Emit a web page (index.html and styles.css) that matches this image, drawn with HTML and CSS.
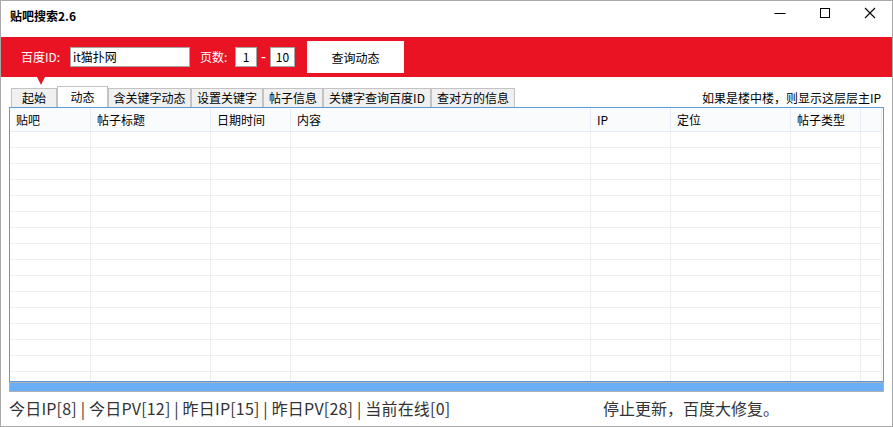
FILE: index.html
```html
<!DOCTYPE html>
<html lang="zh-CN">
<head>
<meta charset="utf-8">
<title>贴吧搜索2.6</title>
<link rel="stylesheet" href="styles.css">
</head>
<body>
<div class="window">
  <div class="titlebar">
    <div class="title">贴吧搜索2.6</div>
    <div class="controls">
      <div class="ctl"><svg width="12" height="12" viewBox="0 0 12 12"><path d="M0.5 6.5H11.5" stroke="#000" stroke-width="1"/></svg></div>
      <div class="ctl"><svg width="12" height="12" viewBox="0 0 12 12"><rect x="1.5" y="1.5" width="9" height="9" fill="none" stroke="#000" stroke-width="1"/></svg></div>
      <div class="ctl"><svg width="12" height="12" viewBox="0 0 12 12"><path d="M1 1L11 11M11 1L1 11" stroke="#000" stroke-width="1.1"/></svg></div>
    </div>
  </div>

  <div class="toolbar">
    <span class="lbl lbl-id">百度ID:</span>
    <div class="field field-id">it猫扑网</div>
    <span class="lbl lbl-page">页数:</span>
    <div class="field field-num">1</div>
    <span class="dash">-</span>
    <div class="field field-num2">10</div>
    <div class="btn">查询动态</div>
    <div class="pointer"></div>
  </div>

  <div class="tabrow">
    <div class="tabs">
      <div class="tab w1">起始</div>
      <div class="tab active w2">动态</div>
      <div class="tab w3">含关键字动态</div>
      <div class="tab w4">设置关键字</div>
      <div class="tab w5">帖子信息</div>
      <div class="tab w6">关键字查询百度ID</div>
      <div class="tab w7">查对方的信息</div>
    </div>
    <div class="hint">如果是楼中楼，则显示这层层主IP</div>
  </div>

  <div class="grid">
    <div class="row head">
      <div class="c">贴吧</div><div class="c">帖子标题</div><div class="c">日期时间</div><div class="c">内容</div><div class="c">IP</div><div class="c">定位</div><div class="c">帖子类型</div><div class="c"></div>
    </div>
    <div class="row"><div class="c"></div><div class="c"></div><div class="c"></div><div class="c"></div><div class="c"></div><div class="c"></div><div class="c"></div><div class="c"></div></div>
    <div class="row"><div class="c"></div><div class="c"></div><div class="c"></div><div class="c"></div><div class="c"></div><div class="c"></div><div class="c"></div><div class="c"></div></div>
    <div class="row"><div class="c"></div><div class="c"></div><div class="c"></div><div class="c"></div><div class="c"></div><div class="c"></div><div class="c"></div><div class="c"></div></div>
    <div class="row"><div class="c"></div><div class="c"></div><div class="c"></div><div class="c"></div><div class="c"></div><div class="c"></div><div class="c"></div><div class="c"></div></div>
    <div class="row"><div class="c"></div><div class="c"></div><div class="c"></div><div class="c"></div><div class="c"></div><div class="c"></div><div class="c"></div><div class="c"></div></div>
    <div class="row"><div class="c"></div><div class="c"></div><div class="c"></div><div class="c"></div><div class="c"></div><div class="c"></div><div class="c"></div><div class="c"></div></div>
    <div class="row"><div class="c"></div><div class="c"></div><div class="c"></div><div class="c"></div><div class="c"></div><div class="c"></div><div class="c"></div><div class="c"></div></div>
    <div class="row"><div class="c"></div><div class="c"></div><div class="c"></div><div class="c"></div><div class="c"></div><div class="c"></div><div class="c"></div><div class="c"></div></div>
    <div class="row"><div class="c"></div><div class="c"></div><div class="c"></div><div class="c"></div><div class="c"></div><div class="c"></div><div class="c"></div><div class="c"></div></div>
    <div class="row"><div class="c"></div><div class="c"></div><div class="c"></div><div class="c"></div><div class="c"></div><div class="c"></div><div class="c"></div><div class="c"></div></div>
    <div class="row"><div class="c"></div><div class="c"></div><div class="c"></div><div class="c"></div><div class="c"></div><div class="c"></div><div class="c"></div><div class="c"></div></div>
    <div class="row"><div class="c"></div><div class="c"></div><div class="c"></div><div class="c"></div><div class="c"></div><div class="c"></div><div class="c"></div><div class="c"></div></div>
    <div class="row"><div class="c"></div><div class="c"></div><div class="c"></div><div class="c"></div><div class="c"></div><div class="c"></div><div class="c"></div><div class="c"></div></div>
    <div class="row"><div class="c"></div><div class="c"></div><div class="c"></div><div class="c"></div><div class="c"></div><div class="c"></div><div class="c"></div><div class="c"></div></div>
    <div class="row"><div class="c"></div><div class="c"></div><div class="c"></div><div class="c"></div><div class="c"></div><div class="c"></div><div class="c"></div><div class="c"></div></div>
    <div class="row"><div class="c"></div><div class="c"></div><div class="c"></div><div class="c"></div><div class="c"></div><div class="c"></div><div class="c"></div><div class="c"></div></div>
  </div>
  <div class="progress"><div class="fill"></div></div>

  <div class="status">
    <div class="stats">今日IP[8] | 今日PV[12] | 昨日IP[15] | 昨日PV[28] | 当前在线[0]</div>
    <div class="notice">停止更新，百度大修复。</div>
  </div>
</div>
</body>
</html>
```
FILE: styles.css
```css
* { box-sizing: border-box; }
html, body { margin: 0; padding: 0; background: #fff; }
body {
  font-family: "Noto Sans CJK SC", "Noto Sans", sans-serif;
  font-size: 12px;
  color: #000;
}
.window {
  width: 893px;
  height: 427px;
  border: 1px solid #a9a9a9;
  display: flex;
  flex-direction: column;
  overflow: hidden;
}
.titlebar {
  height: 36px;
  display: flex;
  justify-content: space-between;
  align-items: flex-start;
  flex: none;
}
.title {
  margin: 7px 0 0 9px;
  font-weight: bold;
  font-size: 12px;
  line-height: 16px;
}
.controls { display: flex; }
.ctl {
  width: 45px;
  height: 24px;
  display: flex;
  align-items: center;
  justify-content: center;
}
.toolbar {
  position: relative;
  height: 40px;
  flex: none;
  background: #e91324;
  display: flex;
  align-items: center;
  padding-left: 20px;
}
.lbl { color: #fff; font-size: 12px; line-height: 16px; }
.lbl-id { width: 49px; }
.lbl-page { width: 35px; margin-left: 10px; }
.field {
  height: 20px;
  background: #fff;
  border: 1px solid #a6a6a6;
  font-size: 12px;
  line-height: 18px;
}
.field-id { width: 120px; padding-left: 2px; }
.field-num { width: 22px; text-align: center; }
.field-num2 { width: 25px; text-align: center; }
.dash {
  width: 13px;
  text-align: center;
  color: #fff;
  font-family: "Liberation Sans", sans-serif;
  font-size: 15px;
  line-height: 16px;
}
.btn {
  margin-left: 12px;
  width: 97px;
  height: 32px;
  background: #fff;
  display: flex;
  align-items: center;
  justify-content: center;
  font-size: 12px;
}
.pointer {
  position: absolute;
  left: 36px;
  top: 40px;
  width: 0;
  height: 0;
  border-left: 4.5px solid transparent;
  border-right: 4.5px solid transparent;
  border-top: 8px solid #e91324;
}
.tabrow {
  height: 30px;
  flex: none;
  display: flex;
  align-items: flex-end;
  padding: 0 11px 0 10px;
}
.tabs { display: flex; align-items: flex-end; }
.tab {
  height: 19px;
  background: #f0f0f0;
  border: 1px solid #c3c3c3;
  border-bottom: none;
  text-align: center;
  font-size: 12px;
  line-height: 18px;
  white-space: nowrap;
}
.tab.active { height: 21px; background: #fff; line-height: 20px; }
.w1 { width: 46px; }
.w2 { width: 51px; }
.w3 { width: 83px; }
.w4 { width: 72px; }
.w5 { width: 60px; }
.w6 { width: 108px; }
.w7 { width: 84px; }
.hint {
  margin-left: auto;
  font-size: 12px;
  line-height: 16px;
  margin-bottom: 1px;
}
.grid {
  margin-left: 8px;
  width: 875px;
  height: 275px;
  flex: none;
  border: 1px solid #5b9bdc;
  padding-right: 1px;
  overflow: hidden;
  background: #fff;
}
.row {
  display: grid;
  grid-template-columns: 81px 120px 80px 300px 80px 120px 70px 1fr;
  height: 16px;
}
.row .c {
  border-right: 1px solid #efefef;
  border-bottom: 1px solid #efefef;
}
.row.head { height: 24px; background: #fafbfd; }
.row.head .c {
  border-right: 1px solid #e6edf7;
  border-bottom: 1px solid #e3ebf7;
  padding-left: 6px;
  line-height: 23px;
  font-size: 12px;
}
.progress {
  margin-left: 8px;
  width: 875px;
  height: 10px;
  flex: none;
  border: 1px solid #b0b0b0;
  background: #6aaef5;
}
.status {
  flex: 1;
  display: flex;
  align-items: center;
  padding-left: 8px;
  padding-bottom: 2px;
  font-size: 16px;
  color: #333;
}
.stats { width: 594px; white-space: nowrap; letter-spacing: 0.2px; }
.notice { white-space: nowrap; }
```
